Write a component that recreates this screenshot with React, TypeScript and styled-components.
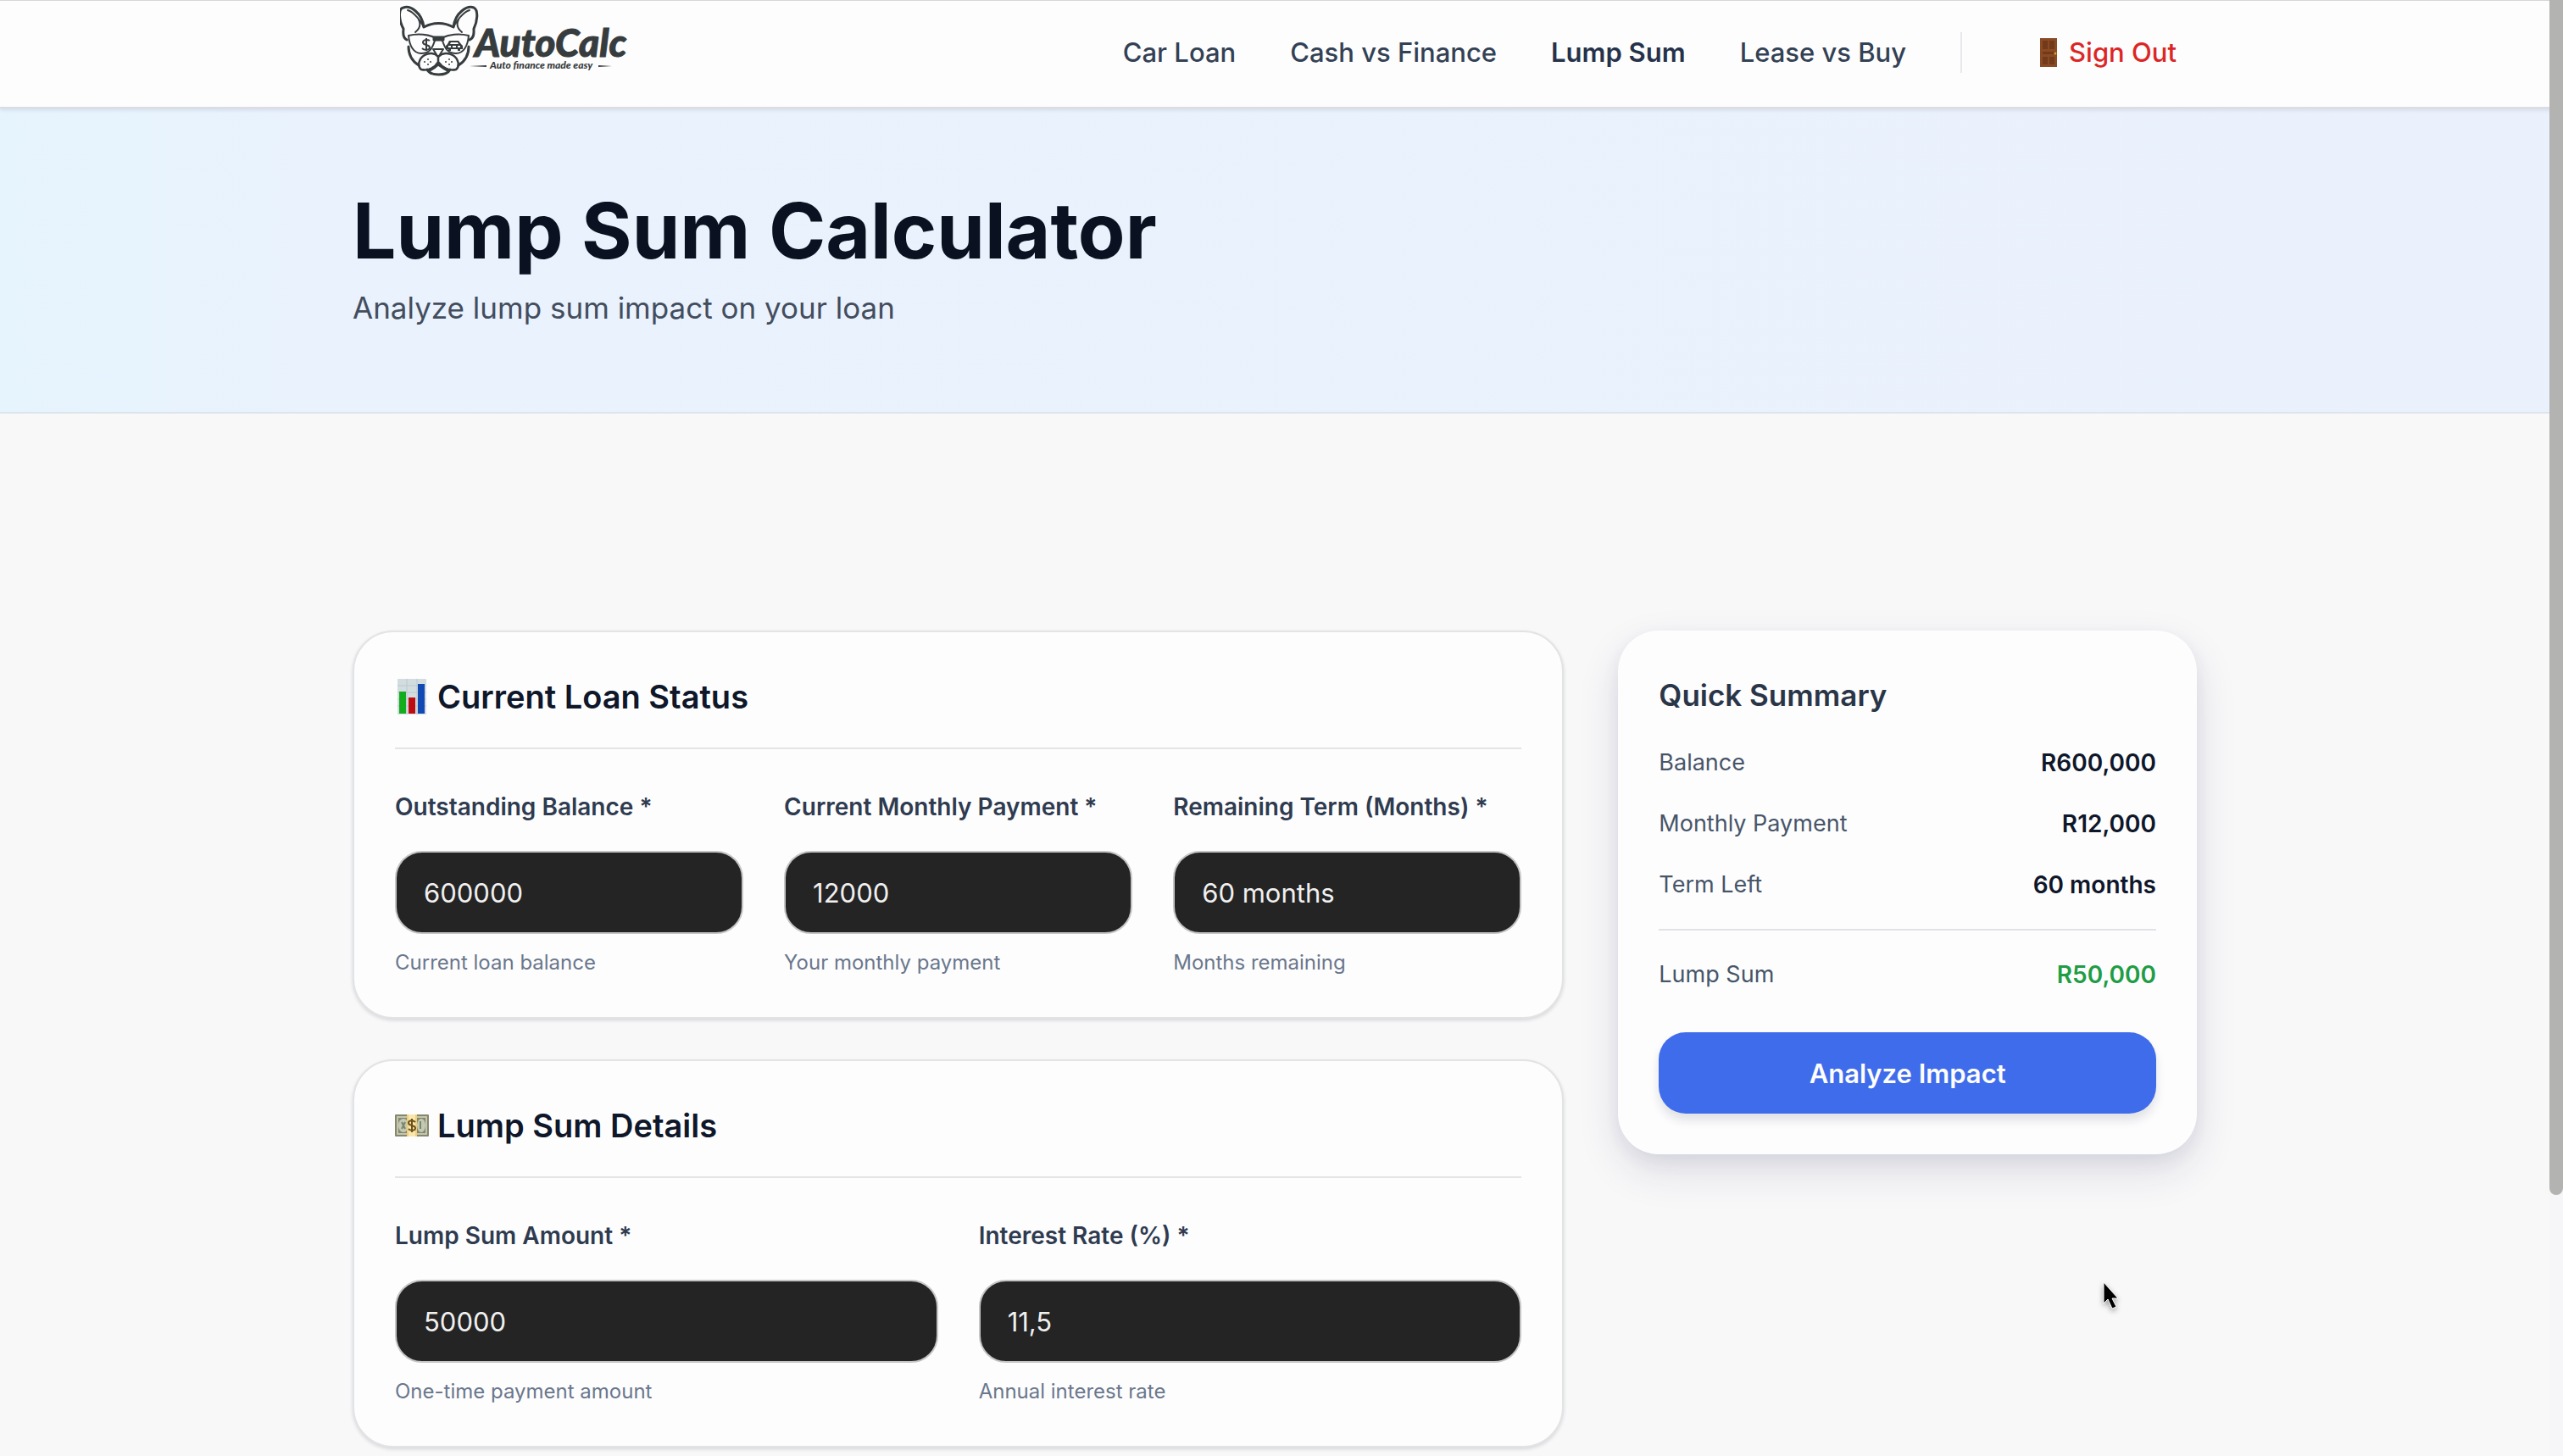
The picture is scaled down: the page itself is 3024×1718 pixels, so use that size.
import React, { useId } from "react";
import styled, { createGlobalStyle } from "styled-components";

const GlobalStyle = createGlobalStyle`
  *, *::before, *::after { box-sizing: border-box; }
  body {
    margin: 0;
    background: #f8f8f9;
    color: #0f172a;
    font-family: Inter, "Liberation Sans", sans-serif;
    font-size: 32px;
  }
  h1, h2, p, dl, dd { margin: 0; }
  input, select, button { font-family: inherit; }
`;

const Page = styled.div`
  min-height: 100vh;
  padding-right: 16px;
  border-top: 1px solid #d9d9dc;
`;

const Container = styled.div`
  width: 100%;
  max-width: 2240px;
  margin: 0 auto;
  padding: 0 32px;
`;

const Header = styled.header`
  margin-right: -16px;
  padding: 0 16px 3px 0;
  background: #fdfdfd;
  border-bottom: 2px solid #dcdce4;
  box-shadow: 0 2px 4px rgba(15, 23, 42, 0.1);
  position: relative;
`;

const HeaderBar = styled(Container)`
  height: 122px;
  padding: 0 32px 0 88px;
  display: flex;
  justify-content: space-between;
`;

const LogoLink = styled.a`
  display: block;
  height: 96px;
`;

const Nav = styled.nav`
  display: flex;
  align-items: center;
  gap: 64px;
`;

const NavLink = styled.a<{ $active?: boolean }>`
  font-size: 31px;
  line-height: 48px;
  font-weight: ${(p) => (p.$active ? 600 : 500)};
  color: ${(p) => (p.$active ? "#26324a" : "#334155")};
  text-decoration: none;
`;

const NavDivider = styled.span`
  width: 2px;
  height: 48px;
  background: #e7e7ee;
`;

const SignOut = styled.button`
  display: flex;
  align-items: center;
  gap: 14px;
  padding: 0 24px 0 28px;
  border: 0;
  background: none;
  color: #dc2626;
  font-size: 31px;
  line-height: 48px;
  font-weight: 500;
`;

const Hero = styled.section`
  margin-right: -16px;
  padding: 96px 16px 96px 0;
  background: linear-gradient(90deg, #e6f4fe 0%, #e9f2fd 12%, #eaf1fc 100%);
  border-bottom: 2px solid #dbe5ec;
`;

const HeroTitle = styled.h1`
  font-size: 91px;
  line-height: 96px;
  font-weight: 700;
  color: #0a1120;
`;

const HeroText = styled.p`
  margin-top: 16px;
  font-size: 35px;
  line-height: 54px;
  color: #434d5e;
`;

const Main = styled(Container).attrs({ as: "main" })`
  padding-top: 256px;
  padding-bottom: 8px;
  display: grid;
  grid-template-columns: repeat(12, minmax(0, 1fr));
  column-gap: 64px;
  align-items: start;
`;

const FormColumn = styled.form`
  grid-column: span 8;
  display: grid;
  gap: 48px;
`;

const Card = styled.section`
  padding: 48px;
  background: #fdfdfe;
  border: 2px solid #e2e3e4;
  border-radius: 48px;
  box-shadow: 0 2px 4px rgba(15, 23, 42, 0.14);
`;

const CardTitle = styled.h2`
  display: flex;
  align-items: center;
  gap: 10px;
  padding-bottom: 32px;
  margin-bottom: 48px;
  border-bottom: 2px solid #e3e4e6;
  font-size: 38px;
  line-height: 56px;
  font-weight: 600;
`;

const Fields = styled.div<{ $columns: number }>`
  display: grid;
  grid-template-columns: repeat(${(p) => p.$columns}, minmax(0, 1fr));
  gap: 48px;
`;

const FieldBox = styled.div`
  display: flex;
  flex-direction: column;
`;

const Label = styled.label`
  margin-bottom: 32px;
  font-size: 28px;
  line-height: 40px;
  font-weight: 600;
  color: #2f3b4f;
`;

const Control = styled.input`
  width: 100%;
  height: 98px;
  padding: 0 32px;
  border: 2px solid #c4c5c4;
  border-radius: 32px;
  background: #242424;
  color: #f0f0f0;
  font-size: 31px;
  appearance: none;
  outline: none;
`;

const Hint = styled.p`
  margin-top: 18px;
  font-size: 24px;
  line-height: 32px;
  color: #6a778c;
`;

const Summary = styled.aside`
  grid-column: span 4;
  padding: 48px;
  background: #fdfdfe;
  border-radius: 48px;
  box-shadow: 0 20px 50px rgba(30, 30, 80, 0.12), 0 8px 20px rgba(30, 30, 80, 0.07);
`;

const SummaryTitle = styled.h2`
  font-size: 35px;
  line-height: 56px;
  font-weight: 600;
  color: #2a3648;
`;

const SummaryList = styled.dl`
  margin: 32px 0 48px;
  display: grid;
  gap: 32px;
`;

const SummaryRow = styled.div<{ $total?: boolean }>`
  display: flex;
  justify-content: space-between;
  line-height: 40px;
  ${(p) => p.$total && "padding-top: 32px; border-top: 2px solid #e0e2e6;"}
`;

const SummaryLabel = styled.dt`
  font-size: 27px;
  color: #475569;
`;

const SummaryValue = styled.dd<{ $positive?: boolean }>`
  font-size: 28px;
  font-weight: 600;
  color: ${(p) => (p.$positive ? "#1f9d45" : "#0f172a")};
`;

const AnalyzeButton = styled.button`
  display: block;
  width: 100%;
  height: 96px;
  border: 0;
  border-radius: 32px;
  background: #3f6cea;
  color: #fdfdfe;
  font-size: 31px;
  font-weight: 600;
  box-shadow: 0 8px 12px rgba(15, 23, 42, 0.12);
`;

const ScrollTrack = styled.div`
  position: fixed;
  top: 0;
  right: 0;
  bottom: 0;
  width: 16px;
  background: #f6f6f8;
`;

const ScrollThumb = styled.div`
  height: 82.1%;
  border-radius: 0 0 8px 8px;
  background: #b3b3b1;
`;

const Pointer = styled.svg`
  position: fixed;
  left: 82%;
  top: 88%;
  filter: drop-shadow(0 3px 3px rgba(0, 0, 0, 0.35));
`;

const Logo = () => (
  <svg width="270" height="92" viewBox="0 0 270 92" role="img" aria-label="AutoCalc">
    <g fill="none" stroke="#373c3e" strokeWidth="3" strokeLinecap="round" strokeLinejoin="round">
      <path d="M8 46C2 43 4 36 4 33C-1 24-3 9 4 8C12 5 26 14 28 31C39 25 52 25 63 31C65 14 79 5 87 8C93 11 91 25 87 33C87 37 88 43 82 46" />
      <path d="M28 31C25 24 16 13 9 11M63 31C66 24 75 13 82 11M22 22C25 28 23 33 18 37M69 22C66 28 68 33 73 37" strokeWidth="2" />
      <path d="M10 41C22 38 34 40 40 43H51C57 40 69 38 81 41C80 53 75 62 66 62C56 62 53 56 50 47C47 44 44 44 41 47C38 56 35 62 25 62C16 62 11 53 10 41Z" strokeWidth="2" />
      <path d="M40 43H51V46H40Z" fill="#373c3e" />
      <path d="M10 54C10 64 14 71 22 76M81 54C81 64 77 71 69 76" />
      <path d="M45 66C41 61 34 61 29 64C22 68 20 77 25 81C33 83 41 79 45 72C50 79 58 83 66 81C71 77 69 68 62 64C57 61 50 61 45 66ZV73" strokeWidth="2.5" />
      <path d="M32 81C36 89 55 89 59 81M35 82C40 80 43 77 45 75C48 77 51 80 56 82" />
    </g>
    <path d="M39 57H51L46 65H44Z" fill="#fdfdfd" stroke="#373c3e" strokeWidth="2" strokeLinejoin="round" />
    <path d="M31 44V59M35 47C32 45 27 46 27 49C27 53 35 51 35 55C35 58 29 59 26 56" fill="none" stroke="#373c3e" strokeWidth="2" />
    <path d="M56 51L58 47H69L72 51L74 53V57H71V59H68V57H60V59H57V57H54V53Z" fill="#373c3e" />
    <path d="M59 51L60 49H68L69 51ZM57 53H60V55H57ZM62 53H66V55H62ZM68 53H71V55H68Z" fill="#fdfdfd" />
    <g fill="#373c3e">
      <circle cx="33" cy="69" r="1" /><circle cx="29" cy="72" r="1" /><circle cx="36" cy="72" r="1" /><circle cx="33" cy="75" r="1" />
      <circle cx="58" cy="69" r="1" /><circle cx="54" cy="72" r="1" /><circle cx="61" cy="72" r="1" /><circle cx="58" cy="75" r="1" />
    </g>
    <text fontFamily="Lato, sans-serif" fontStyle="italic" fill="#373c3e">
      <tspan x="88" y="66" fontSize="46" fontWeight="900" stroke="#373c3e" strokeWidth="1">AutoCalc</tspan>
      <tspan x="106" y="80" fontSize="12" fontWeight="900">Auto finance made easy</tspan>
    </text>
    <path d="M82 77L102 76V78ZM250 77L234 76V78Z" fill="#373c3e" />
  </svg>
);

const DoorIcon = () => (
  <svg width="20" height="34" viewBox="0 0 20 34" aria-hidden="true">
    <rect width="20" height="34" fill="#8a4a24" />
    <path d="M3 3H9V13H3ZM11 3H17V13H11ZM3 22H9V31H3ZM11 22H17V31H11ZM3 16H17V19H3Z" fill="#733a1a" />
    <circle cx="18" cy="18" r="1.5" fill="#d8a13a" />
  </svg>
);

const ChartIcon = () => (
  <svg width="40" height="42" viewBox="0 0 40 42" aria-hidden="true">
    <rect x="3" width="34" height="42" fill="#d3dde0" />
    <path d="M3 8H37M3 16H37M3 24H37M3 32H37M14 0V42M26 0V42" stroke="#b9c8d0" />
    <rect x="5" y="15" width="8" height="26" fill="#12ad1c" />
    <rect x="16" y="22" width="8" height="19" fill="#bd0d12" />
    <rect x="27" y="6" width="8" height="35" fill="#1149b5" />
  </svg>
);

const CashIcon = () => (
  <svg width="40" height="26" viewBox="0 0 40 26" aria-hidden="true">
    <rect width="40" height="26" rx="1" fill="#85876f" />
    <rect x="3" y="3" width="34" height="20" fill="none" stroke="#c3c6ac" strokeWidth="2" />
    <ellipse cx="10" cy="13" rx="6" ry="8" fill="#c3c9b4" />
    <ellipse cx="31" cy="13" rx="5" ry="8" fill="#c3c9b4" />
    <path d="M8 9L12 17M12 9L8 17M30 8V17" stroke="#7c8669" strokeWidth="2" />
    <rect x="14" width="12" height="26" fill="#f1cf72" />
    <rect x="16" width="8" height="26" fill="#f8e7b0" />
    <path d="M20 5V21M24 9C21 6 16 7 16 10C16 14 24 12 24 16C24 19 19 20 16 17" fill="none" stroke="#70501a" strokeWidth="2" />
  </svg>
);

type FieldProps = { label: string; hint: string; value: string; options?: string[] };

const Field = ({ label, hint, value, options }: FieldProps) => {
  const id = useId();
  return (
    <FieldBox>
      <Label htmlFor={id}>{label} *</Label>
      {options ? (
        <Control as="select" id={id} defaultValue={value} aria-describedby={`${id}-hint`}>
          {options.map((o) => (
            <option key={o}>{o}</option>
          ))}
        </Control>
      ) : (
        <Control id={id} inputMode="decimal" defaultValue={value} required aria-describedby={`${id}-hint`} />
      )}
      <Hint id={`${id}-hint`}>{hint}</Hint>
    </FieldBox>
  );
};

const links = ["Car Loan", "Cash vs Finance", "Lump Sum", "Lease vs Buy"];

const summary = [
  { label: "Balance", value: "R600,000" },
  { label: "Monthly Payment", value: "R12,000" },
  { label: "Term Left", value: "60 months" },
  { label: "Lump Sum", value: "R50,000", total: true },
];

export default function App() {
  return (
    <Page>
      <GlobalStyle />
      <Header>
        <HeaderBar>
          <LogoLink href="#home"><Logo /></LogoLink>
          <Nav aria-label="Calculators">
            {links.map((l) => (
              <NavLink key={l} href="#calculator" $active={l === "Lump Sum"}>{l}</NavLink>
            ))}
            <NavDivider />
            <SignOut type="button"><DoorIcon />Sign Out</SignOut>
          </Nav>
        </HeaderBar>
      </Header>
      <Hero>
        <Container>
          <HeroTitle>Lump Sum Calculator</HeroTitle>
          <HeroText>Analyze lump sum impact on your loan</HeroText>
        </Container>
      </Hero>
      <Main>
        <FormColumn id="loan-form">
          <Card>
            <CardTitle><ChartIcon />Current Loan Status</CardTitle>
            <Fields $columns={3}>
              <Field label="Outstanding Balance" value="600000" hint="Current loan balance" />
              <Field label="Current Monthly Payment" value="12000" hint="Your monthly payment" />
              <Field label="Remaining Term (Months)" value="60 months" hint="Months remaining" options={["48 months", "60 months", "72 months"]} />
            </Fields>
          </Card>
          <Card>
            <CardTitle><CashIcon />Lump Sum Details</CardTitle>
            <Fields $columns={2}>
              <Field label="Lump Sum Amount" value="50000" hint="One-time payment amount" />
              <Field label="Interest Rate (%)" value="11,5" hint="Annual interest rate" />
            </Fields>
          </Card>
        </FormColumn>
        <Summary>
          <SummaryTitle>Quick Summary</SummaryTitle>
          <SummaryList>
            {summary.map((s) => (
              <SummaryRow key={s.label} $total={s.total}>
                <SummaryLabel>{s.label}</SummaryLabel>
                <SummaryValue $positive={s.total}>{s.value}</SummaryValue>
              </SummaryRow>
            ))}
          </SummaryList>
          <AnalyzeButton type="submit" form="loan-form">Analyze Impact</AnalyzeButton>
        </Summary>
      </Main>
      <ScrollTrack><ScrollThumb /></ScrollTrack>
      <Pointer width="20" height="34" viewBox="0 0 20 34" aria-hidden="true">
        <path d="M2 1V26L7 21L12 32L17 30L12 20H19Z" fill="#000" stroke="#fff" strokeWidth="1" />
      </Pointer>
    </Page>
  );
}
